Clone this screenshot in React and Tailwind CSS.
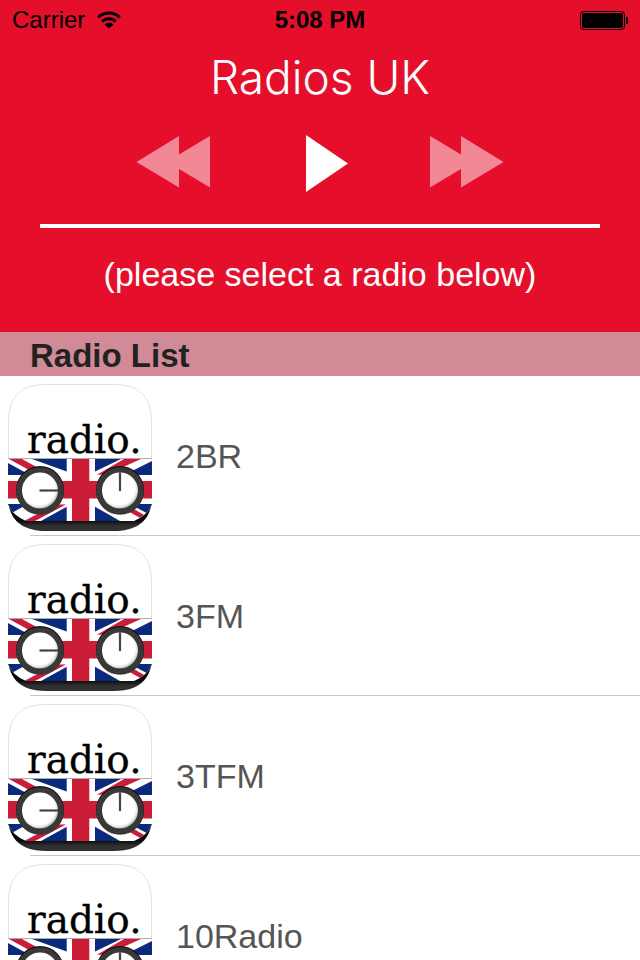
import { useState } from 'react'

const radios = ['2BR', '3FM', '3TFM', '10Radio']

const WifiIcon = () => (
  <svg viewBox="0 0 24 18" className="w-6 h-[18px]" fill="none" stroke="#000" strokeWidth="3" aria-hidden="true">
    <path d="M1.2 6.4a15.6 15.6 0 0 1 21.6 0" />
    <path d="M5.2 10.6a9.8 9.8 0 0 1 13.6 0" />
    <path d="M12 17.6L7.6 13.4a6 6 0 0 1 8.8 0z" fill="#000" stroke="none" />
  </svg>
)

const BatteryIcon = () => (
  <svg viewBox="0 0 48 19" className="w-12 h-[19px]" aria-hidden="true">
    <rect x="0.5" y="0.5" width="44" height="18" rx="3" fill="none" stroke="#000" />
    <rect x="2" y="2" width="41" height="15" rx="2" />
    <path d="M46 6h1q2 1 2 3.5t-2 3.5h-1z" />
  </svg>
)

const Knob = ({ cx, hand }) => (
  <>
    <circle cx={cx} cy="106" r="24" fill="#111" />
    <circle cx={cx} cy="107" r="23.8" fill="#383838" />
    <circle cx={cx} cy="106.5" r="18" fill="url(#knob)" />
    <path d={hand} stroke="#444" strokeWidth="2.2" />
  </>
)

const RadioArt = () => (
  <svg viewBox="0 0 144 148" className="w-36 h-[148px] shrink-0" aria-hidden="true">
    <defs>
      <clipPath id="body">
        <path d="M0 60h144v60Q140 131 126 137H18Q4 131 0 120z" />
      </clipPath>
      <radialGradient id="knob" cx="0.46" cy="0.44" r="0.58">
        <stop offset="0.78" stopColor="#fff" />
        <stop offset="0.9" stopColor="#e2e2e2" />
        <stop offset="1" stopColor="#999" />
      </radialGradient>
      <linearGradient id="base" x1="0" y1="0" x2="0" y2="1">
        <stop offset="0.7" stopColor="#0a0a0a" />
        <stop offset="0.85" stopColor="#303030" />
      </linearGradient>
    </defs>
    <path d="M0 112h144C144 136 130 147 106 147H38C14 147 0 136 0 112z" fill="url(#base)" />
    <path d="M0.5 112V38C0.5 12 14 0.5 38 0.5h68c24 0 37.5 11.5 37.5 37.5v74z" fill="#fff" stroke="#e2e2e2" />
    <g clipPath="url(#body)">
      <rect y="74" width="144" height="63" fill="#fff" />
      <path
        d="M24 75h34.7v12.5zM0 79l22 12H0zM0 120h20L0 131zM58.7 122.7V137H33zM87 75h26L87 87.5zM144 77v14h-28zM87 122.7L112 137H87zM144 120v12l-22-12z"
        fill="#0a2a7c"
      />
      <path
        d="M1 75h13l29 16H30zM16 137h11l31-16.5H48zM89 90.7h9L133 75h-17zM108 120.5h10l26 15v5z"
        fill="#cc1d38"
      />
      <path d="M64 75h17.3v62H64zM0 97h144v17.5H0z" fill="#cc1d38" />
      <path d="M0 74.5h144" stroke="#aaa" />
    </g>
    <Knob cx="32" hand="M31.5 106.5H50" />
    <Knob cx="112" hand="M112 107V88.5" />
    <text
      x="19"
      y="69"
      fontSize="39"
      stroke="#000"
      strokeWidth="0.3"
      style={{ fontFamily: '"DejaVu Serif", serif' }}
    >
      radio.
    </text>
  </svg>
)

const App = () => {
  const [current, setCurrent] = useState(null)

  return (
    <div className="h-screen flex flex-col bg-white font-['Liberation_Sans',Arial,sans-serif]">
      <header className="bg-[#e50e2b] pb-9 text-white text-center">
        <div className="h-10 px-3 grid grid-cols-3 items-center text-black text-2xl leading-10">
          <div className="flex items-center gap-3">
            <span>Carrier</span>
            <WifiIcon />
          </div>
          <span className="font-bold">5:08 PM</span>
          <div className="flex justify-end">
            <BatteryIcon />
          </div>
        </div>

        <h1 className="pt-2 text-[46px] leading-[58px] font-light font-['Inter',sans-serif]">Radios UK</h1>

        {/* Player controls */}
        <div className="pt-7 flex justify-center gap-[73px]">
          <button type="button" aria-label="Previous" className="opacity-50">
            <svg viewBox="0 0 74 58" className="w-[74px] h-[58px]" fill="#fff">
              <path d="M0.5 28L43 2v18.5L74 2v51.5L43 35v18.5z" />
            </svg>
          </button>
          <button type="button" aria-label="Play">
            <svg viewBox="0 0 74 58" className="w-[74px] h-[58px]" fill="#fff">
              <path d="M23 1l42 28.5L23 58z" />
            </svg>
          </button>
          <button type="button" aria-label="Next" className="opacity-50">
            <svg viewBox="0 0 74 58" className="w-[74px] h-[58px]" fill="#fff">
              <path d="M73.5 28L31 2v18.5L0 2v51.5L31 35v18.5z" />
            </svg>
          </button>
        </div>

        <div className="mx-10 mt-8 h-1 bg-white"></div>
        <p className="pt-6 text-[34px] leading-[44px]">{current || '(please select a radio below)'}</p>
      </header>

      <h2 className="pt-1 px-[30px] bg-[#d18b96] text-[#222] text-[33px] leading-10 font-bold">Radio List</h2>

      <ul className="flex-1 min-h-0 overflow-y-auto [scrollbar-width:none]">
        {radios.map((name) => (
          <li key={name}>
            <button
              type="button"
              onClick={() => setCurrent(name)}
              className="w-full px-2 pt-2 pb-[3px] flex items-center gap-6 text-left"
            >
              <RadioArt />
              <span className="pb-1 text-[34px] leading-10 text-[#555]">{name}</span>
            </button>
            <hr className="ml-[30px] border-[#c8c7cc]" />
          </li>
        ))}
      </ul>
    </div>
  )
}

export default App
